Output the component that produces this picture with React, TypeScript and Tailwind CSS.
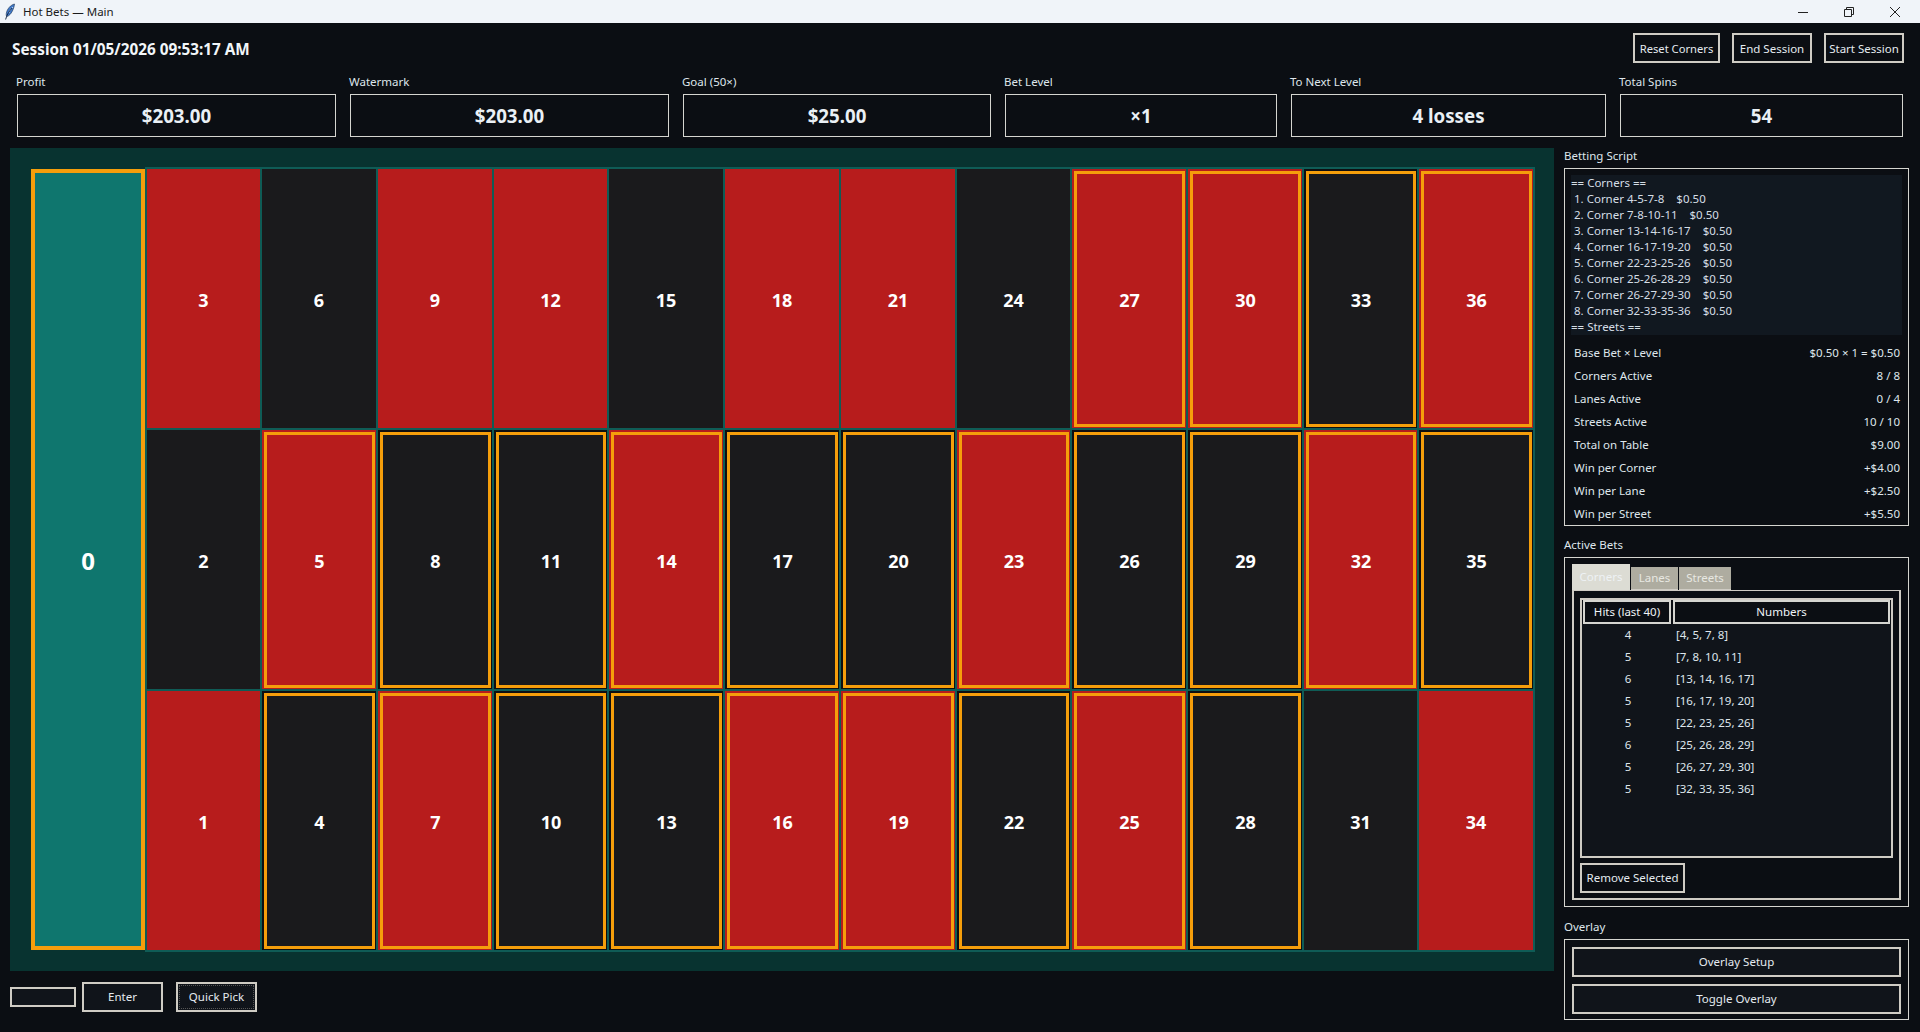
import React from "react";

const RED = new Set([1, 3, 5, 7, 9, 12, 14, 16, 18, 19, 21, 23, 25, 27, 30, 32, 34, 36]);
const HOT = new Set([27, 30, 33, 36, 5, 8, 11, 14, 17, 20, 23, 26, 29, 32, 35, 4, 7, 10, 13, 16, 19, 22, 25, 28]);
const NUMBERS: number[] = [];
for (let row = 0; row < 3; row++) for (let col = 0; col < 12; col++) NUMBERS.push(3 * col + 3 - row);

const STATS = [
  { label: "Profit", value: "$203.00", w: "w-[319px]" },
  { label: "Watermark", value: "$203.00", w: "w-[319px] ml-[14px]" },
  { label: "Goal (50×)", value: "$25.00", w: "w-[308px] ml-[14px]" },
  { label: "Bet Level", value: "×1", w: "w-[272px] ml-[14px]" },
  { label: "To Next Level", value: "4 losses", w: "w-[315px] ml-[14px]" },
  { label: "Total Spins", value: "54", w: "w-[283px] ml-[14px]" },
];

const SCRIPT = [
  "1. Corner 4-5-7-8    $0.50",
  "2. Corner 7-8-10-11    $0.50",
  "3. Corner 13-14-16-17    $0.50",
  "4. Corner 16-17-19-20    $0.50",
  "5. Corner 22-23-25-26    $0.50",
  "6. Corner 25-26-28-29    $0.50",
  "7. Corner 26-27-29-30    $0.50",
  "8. Corner 32-33-35-36    $0.50",
];

const SUMMARY = [
  ["Base Bet × Level", "$0.50 × 1 = $0.50"],
  ["Corners Active", "8 / 8"],
  ["Lanes Active", "0 / 4"],
  ["Streets Active", "10 / 10"],
  ["Total on Table", "$9.00"],
  ["Win per Corner", "+$4.00"],
  ["Win per Lane", "+$2.50"],
  ["Win per Street", "+$5.50"],
];

const HITS = [
  ["4", "[4, 5, 7, 8]"],
  ["5", "[7, 8, 10, 11]"],
  ["6", "[13, 14, 16, 17]"],
  ["5", "[16, 17, 19, 20]"],
  ["5", "[22, 23, 25, 26]"],
  ["6", "[25, 26, 28, 29]"],
  ["5", "[26, 27, 29, 30]"],
  ["5", "[32, 33, 35, 36]"],
];

function Cell({ n }: { n: number }) {
  const red = RED.has(n);
  const bg = red ? "bg-[#b71c1c]" : "bg-[#1a1a1c]";
  if (HOT.has(n)) {
    return (
      <div className={`${red ? "bg-[#b71c1c]" : "bg-[#0e0f11]"} pt-[2px] pl-[2px] pr-px pb-px flex`}>
        <div className={`${bg} flex-1 border-[3px] border-[#f59e0b] flex items-center justify-center text-white text-[18px] font-bold pt-[2px]`}>
          {n}
        </div>
      </div>
    );
  }
  return <div className={`${bg} flex items-center justify-center text-white text-[18px] font-bold pt-[2px]`}>{n}</div>;
}

function TkButton({ className, children }: { className: string; children: React.ReactNode }) {
  return (
    <div className={`border-2 border-[#cfccc4] flex items-center justify-center text-[#e5ebf0] ${className}`}>
      {children}
    </div>
  );
}

function Feather() {
  return (
    <svg width="12" height="17" viewBox="0 0 12 17" fill="none">
      <path d="M10.5 1C6.5 2 3 6 2.3 10.5 2 12.5 2.5 13.6 3.5 13.3 7 12 10 6 10.5 1Z" fill="#3f78c8" stroke="#1d3350" strokeWidth="0.6" />
      <path d="M9 4C6.5 6 5.5 8 5 10" stroke="#dce8f5" strokeWidth="0.8" />
      <path d="M8 5C5.5 8 3 11 1.6 16.5" stroke="#10233f" strokeWidth="0.9" />
    </svg>
  );
}

export default function App() {
  return (
    <div
      className="w-[1920px] h-[1032px] overflow-hidden flex flex-col bg-[#0b0e13] text-[#dfe6ec] text-[11.5px] leading-[16px]"
      style={{ fontFamily: '"Noto Sans", "Open Sans", sans-serif' }}
    >
      <div className="h-[23px] bg-[#f0f4f9] flex items-center text-[#1a1a1a] pl-[4px]">
        <Feather />
        <span className="ml-[7px]">Hot Bets — Main</span>
        <div className="ml-auto flex items-center text-[#222]">
          <svg width="12" height="12" viewBox="0 0 12 12" className="mr-[34px]">
            <path d="M1 6.5h10" stroke="currentColor" strokeWidth="1" />
          </svg>
          <svg width="12" height="12" viewBox="0 0 12 12" className="mr-[34px]">
            <path d="M1.5 3.5h7v7h-7zM3.5 3.5V1.5h7v7h-2" fill="none" stroke="currentColor" strokeWidth="1" />
          </svg>
          <svg width="12" height="12" viewBox="0 0 12 12" className="mr-[19px]">
            <path d="M1 1l10 10M11 1L1 11" stroke="currentColor" strokeWidth="1" />
          </svg>
        </div>
      </div>

      <div className="h-[50px] flex items-start pt-[10px] pl-[12px] pr-[16px]">
        <div className="text-[15.3px] font-bold text-[#f2f6f9] h-[30px] pt-[1px] flex items-center">Session 01/05/2026 09:53:17 AM</div>
        <div className="ml-auto flex gap-[12px]">
          <TkButton className="w-[87px] h-[30px] pt-px text-[11.2px]">Reset Corners</TkButton>
          <TkButton className="w-[80px] h-[30px] pt-px">End Session</TkButton>
          <TkButton className="w-[80px] h-[30px] pt-px">Start Session</TkButton>
        </div>
      </div>

      <div className="flex pl-[17px] h-[75px]">
        {STATS.map((s) => (
          <div key={s.label} className={`${s.w} flex flex-col`}>
            <div className="h-[21px] pt-[1px] -ml-px">{s.label}</div>
            <div className="h-[43px] border border-[#d5d5d0] pt-px flex items-center justify-center text-[18.7px] font-bold text-[#eaf0f5]">
              {s.value}
            </div>
          </div>
        ))}
      </div>

      <div className="flex flex-1 pl-[10px]">
        <div className="w-[1544px] flex flex-col">
          <div className="h-[823px] bg-[#083330] pl-[21px] pr-[19px] pt-[19px] flex">
            <div className="w-[114px] h-[781px] mt-[2px] bg-[#0f766e] border-[4px] border-[#f59e0b] flex items-center justify-center text-white text-[24px] font-bold pt-[2px]">
              0
            </div>
            <div className="w-[1390px] h-[785px] bg-[#0f5c56] p-[2px] grid grid-cols-[113px_114px_114px_113px_114px_114px_114px_113px_114px_114px_113px_114px] grid-rows-3 gap-[2px]">
              {NUMBERS.map((n) => (
                <Cell key={n} n={n} />
              ))}
            </div>
          </div>
          <div className="flex items-center mt-[11px]">
            <div className="w-[66px] h-[20px] border-2 border-[#cfccc4] bg-[#10141a]" />
            <TkButton className="w-[81px] h-[30px] ml-[6px] bg-[#10141a]">Enter</TkButton>
            <TkButton className="w-[81px] h-[30px] ml-[13px] bg-[#10141a]">
              <span className="border border-dotted border-[#555] w-[75px] h-[24px] flex items-center justify-center">Quick Pick</span>
            </TkButton>
          </div>
        </div>

        <div className="w-[345px] ml-[10px] flex flex-col">
          <div className="h-[20px]">Betting Script</div>
          <div className="h-[358px] border border-[#d5d5d0] pl-[6px] pr-[6px] pt-[6px]">
            <div className="h-[160px] bg-[#111820] text-[#d5dee6]">
              <div>== Corners ==</div>
              {SCRIPT.map((l) => (
                <div key={l} className="pl-[3px] whitespace-pre">{l}</div>
              ))}
              <div>== Streets ==</div>
            </div>
            <div className="pt-[6px] pl-[3px] pr-[2px]">
              {SUMMARY.map(([a, b]) => (
                <div key={a} className="h-[23px] flex items-center justify-between">
                  <span>{a}</span>
                  <span>{b}</span>
                </div>
              ))}
            </div>
          </div>

          <div className="h-[31px] pt-[11px]">Active Bets</div>
          <div className="h-[350px] border border-[#d5d5d0] px-[7px] pt-[6px] flex flex-col">
            <div className="flex items-end h-[26px]">
              <div className="w-[58px] h-[26px] bg-[#dcdcd4] text-[#eef2f4] flex items-center justify-center">Corners</div>
              <div className="w-[47px] h-[23px] bg-[#aeaca0] text-[#e8e8e2] flex items-center justify-center ml-px border-b border-[#cfccc4]">Lanes</div>
              <div className="w-[52px] h-[23px] bg-[#aeaca0] text-[#e8e8e2] flex items-center justify-center ml-px border-b border-[#cfccc4]">Streets</div>
            </div>
            <div className="h-[310px] border-2 border-[#cfccc4] border-t-[1px] px-[6px] pt-[7px] flex flex-col">
              <div className="h-[260px] border-2 border-[#cfccc4] bg-[#10141a] flex flex-col">
                <div className="flex gap-[2px] h-[24px] bg-[#0b0e13]">
                  <div className="w-[88px] ml-px border-2 border-[#d5d5d0] flex items-center justify-center text-[#f0f4f7]">Hits (last 40)</div>
                  <div className="flex-1 mr-px border-2 border-[#d5d5d0] flex items-center justify-center text-[#f0f4f7]">Numbers</div>
                </div>
                {HITS.map(([h, nums]) => (
                  <div key={nums} className="h-[22px] flex items-center">
                    <span className="w-[92px] text-center">{h}</span>
                    <span className="pl-[2px]">{nums}</span>
                  </div>
                ))}
              </div>
              <TkButton className="w-[105px] h-[30px] mt-[5px] self-start">Remove Selected</TkButton>
            </div>
          </div>

          <div className="h-[32px] pt-[12px]">Overlay</div>
          <div className="h-[81px] border border-[#d5d5d0] px-[7px] pt-[7px] flex flex-col gap-[7px]">
            <TkButton className="h-[30px] bg-[#10141a]">Overlay Setup</TkButton>
            <TkButton className="h-[30px] bg-[#10141a]">Toggle Overlay</TkButton>
          </div>
        </div>
      </div>
    </div>
  );
}
